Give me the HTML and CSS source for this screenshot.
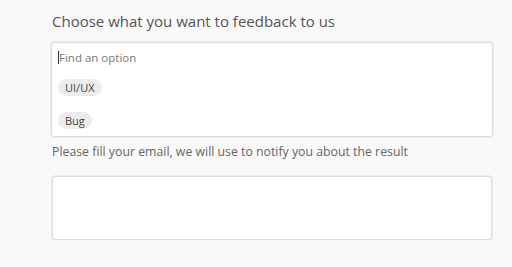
FILE: index.html
```html
<!DOCTYPE html>
<html lang="en">
<head>
    <meta charset="UTF-8">
    <meta name="viewport" content="width=device-width, initial-scale=1.0">
    <title>feedback</title>
    <link rel="stylesheet" href="styles.css">
</head>
<body>
  <div class="form">
    <h2 class="title">Choose what you want to feedback to us</h2>

    <div class="picker">
      <div class="search"><span class="caret"></span>Find an option</div>
      <div class="options">
        <span class="chip">UI/UX</span>
        <span class="chip">Bug</span>
      </div>
    </div>

    <p class="label">Please fill your email, we will use to notify you about the result</p>
    <div class="email"></div>
  </div>
</body>
</html>
```

FILE: styles.css
```css
html {
    background: #f9f9f9;
    font-family: "Open Sans", "Noto Sans", sans-serif;
}

body {
    margin: 0;
}

.form {
    width: 442px;
    padding: 10px 0 0 51px;
}

.title {
    margin: 0 0 10px 1px;
    font-size: 15px;
    font-weight: normal;
    color: #555;
    line-height: 22px;
}

.picker {
    background: #fff;
    border: 1px solid #ddd;
    box-shadow: 0 0 0 1px #ececec;
    border-radius: 3px;
    height: 93px;
    padding: 0 6px;
}

.search {
    display: flex;
    align-items: center;
    height: 28px;
    font-size: 11.5px;
    color: #777;
}

.caret {
    width: 1px;
    height: 13px;
    background: #333;
}

.options {
    display: flex;
    flex-direction: column;
    align-items: flex-start;
    gap: 16px;
    margin-top: 8px;
}

.chip {
    background: #ececec;
    border-radius: 9px;
    padding: 0 7px;
    height: 17px;
    line-height: 17px;
    font-size: 11px;
    color: #444;
}

.label {
    margin: 6px 0 0 1px;
    font-size: 12.3px;
    color: #666;
    line-height: 18px;
}

.email {
    margin: 15px 0 0 1px;
    width: 438px;
    height: 62px;
    background: #fff;
    border: 1px solid #ddd;
    box-shadow: 0 0 0 1px #ececec;
    border-radius: 3px;
}
```
